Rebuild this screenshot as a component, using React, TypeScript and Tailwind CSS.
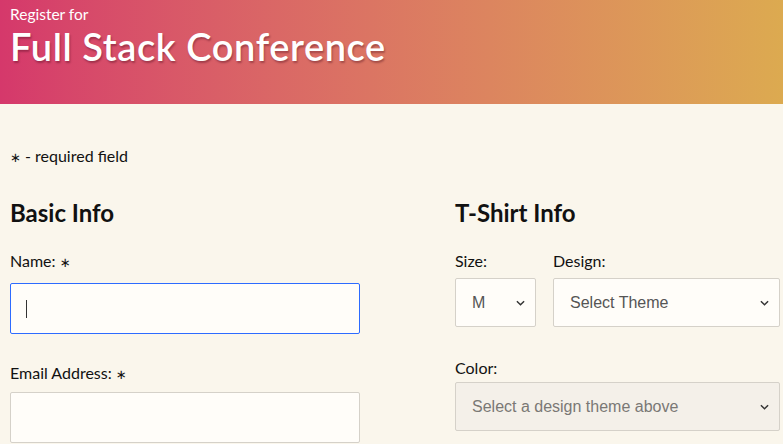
import React from 'react';

const Chevron = () => (
    <svg viewBox="0 0 10 6" className="w-[9px] h-[6px] flex-shrink-0" fill="none" stroke="#333" strokeWidth="1.6">
        <path d="M1 1 L5 5 L9 1" />
    </svg>
);

interface SelectBoxProps {
    value: string;
    disabled?: boolean;
    className?: string;
}

const SelectBox = ({ value, disabled, className }: SelectBoxProps) => (
    <div
        className={`h-[49px] flex items-center justify-between pl-4 pr-[10px] border border-[#d5d1c9] rounded-[2px] font-['Liberation_Sans',Arial,sans-serif] text-[16px] ${
            disabled ? 'bg-[#f4f0e9] text-[#7a7875]' : 'bg-[#fffdf9] text-[#555]'
        } ${className ?? ''}`}
    >
        <span>{value}</span>
        <Chevron />
    </div>
);

const Label = ({ children, className }: { children: React.ReactNode; className?: string }) => (
    <div className={`text-[16px] leading-6 text-[#111] ${className ?? ''}`}>{children}</div>
);

const Star = () => <span className="font-['DejaVu_Sans',sans-serif] text-[13px]">∗</span>;

export default function App() {
    return (
        <div className="min-h-screen bg-[#faf6ec] font-['Lato','Noto_Sans',sans-serif] text-[#111]">
            {/* header banner */}
            <header className="h-[104px] bg-linear-to-r from-[#d5386b] to-[#dcaa50] px-[10px] pt-[5px] text-white">
                <div className="text-[15.5px] leading-[18px]">Register for</div>
                <h1 className="mt-[3px] text-[38px] leading-[40px] font-semibold tracking-[0.6px] [text-shadow:1px_2px_2px_rgba(60,0,20,0.35)]">
                    Full Stack Conference
                </h1>
            </header>

            <main className="pl-[10px] pt-[40px]">
                <p className="text-[16px] leading-6">
                    <Star /> - required field
                </p>

                <div className="flex mt-[27px]">
                    <section className="w-[350px] shrink-0">
                        <h2 className="text-[24px] leading-8 font-bold">Basic Info</h2>
                        <Label className="mt-[20px] mb-2">
                            Name: <Star />
                        </Label>
                        <div className="h-[51px] flex items-center pl-[15px] bg-[#fffdf9] border-[1.5px] border-[#2d6bff] rounded-[2px]">
                            <span className="w-px h-[18px] bg-[#333]" />
                        </div>
                        <Label className="mt-[27px] mb-[5px]">
                            Email Address: <Star />
                        </Label>
                        <div className="h-[51px] bg-[#fffdf9] border border-[#d5d1c9] rounded-[2px]" />
                    </section>

                    <section className="ml-[95px] w-[325px] shrink-0">
                        <h2 className="text-[24px] leading-8 font-bold">T-Shirt Info</h2>
                        <div className="flex gap-[17px] mt-[20px]">
                            <div className="w-[81px]">
                                <Label className="mb-[5px]">Size:</Label>
                                <SelectBox value="M" />
                            </div>
                            <div className="flex-1">
                                <Label className="mb-[5px]">Design:</Label>
                                <SelectBox value="Select Theme" />
                            </div>
                        </div>
                        <Label className="mt-[29px] mb-[2px]">Color:</Label>
                        <SelectBox value="Select a design theme above" disabled />
                    </section>
                </div>
            </main>
        </div>
    );
}
